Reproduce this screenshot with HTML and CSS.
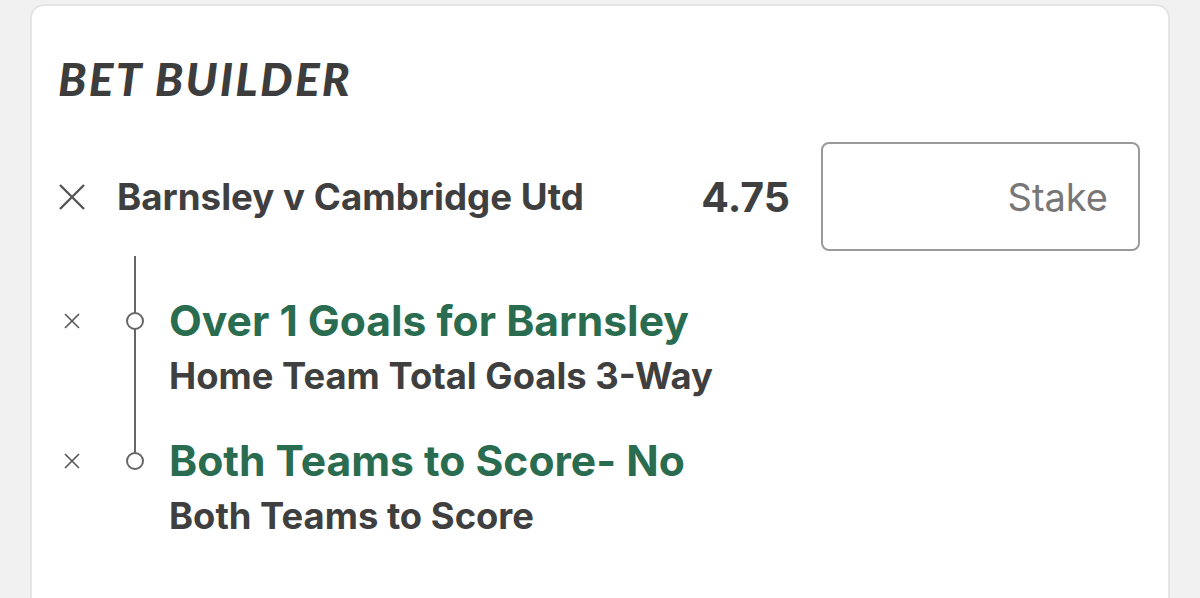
FILE: index.html
```html
<!DOCTYPE html>
<html>
<head>
<meta charset="utf-8">
<link rel="stylesheet" href="styles.css">
</head>
<body>
<div class="card">
  <h1 class="title">BET BUILDER</h1>
  <div class="main-row">
    <span class="x-icon big">
      <svg width="28" height="28" viewBox="0 0 28 28"><path d="M2 2 L26 26 M26 2 L2 26" stroke="#555" stroke-width="2.4" fill="none"/></svg>
    </span>
    <span class="match">Barnsley v Cambridge Utd</span>
    <span class="odds">4.75</span>
    <div class="stake">Stake</div>
  </div>
  <div class="legs">
    <div class="leg">
      <span class="x-icon small">
        <svg width="16" height="16" viewBox="0 0 16 16"><path d="M1 1 L15 15 M15 1 L1 15" stroke="#555" stroke-width="1.6" fill="none"/></svg>
      </span>
      <span class="node"></span>
      <div class="leg-text">
        <div class="leg-title">Over 1 Goals for Barnsley</div>
        <div class="leg-market">Home Team Total Goals 3-Way</div>
      </div>
    </div>
    <div class="leg">
      <span class="x-icon small">
        <svg width="16" height="16" viewBox="0 0 16 16"><path d="M1 1 L15 15 M15 1 L1 15" stroke="#555" stroke-width="1.6" fill="none"/></svg>
      </span>
      <span class="node"></span>
      <div class="leg-text">
        <div class="leg-title">Both Teams to Score- No</div>
        <div class="leg-market">Both Teams to Score</div>
      </div>
    </div>
  </div>
</div>
</body>
</html>
```

FILE: styles.css
```css
html, body {
  margin: 0;
  padding: 0;
  background: #f1f1f1;
  height: 100%;
  overflow: hidden;
}

body {
  font-family: Inter, "Noto Sans", sans-serif;
  color: #3f3f3f;
}

.card {
  margin: 4px 30px 0 30px;
  height: 620px;
  background: #fff;
  border: 2px solid #e4e4e4;
  border-radius: 14px;
  padding: 0 28px 0 26px;
  box-sizing: border-box;
}

.title {
  margin: 0;
  padding-top: 45px;
  font-family: Lato, sans-serif;
  font-weight: 900;
  font-style: italic;
  font-size: 46px;
  line-height: 56px;
  letter-spacing: 2.3px;
  color: #3d3d3d;
}

.main-row {
  display: flex;
  align-items: center;
  margin-top: 35px;
}

.x-icon {
  display: flex;
  align-items: center;
  justify-content: center;
  width: 28px;
  flex: none;
}

.match {
  margin-left: 31px;
  font-weight: 700;
  font-size: 36.7px;
  flex: 1;
}

.odds {
  font-weight: 700;
  font-size: 41px;
  margin-right: 31px;
}

.stake {
  width: 319px;
  height: 109px;
  box-sizing: border-box;
  border: 2px solid #9a9a9a;
  border-radius: 8px;
  display: flex;
  align-items: center;
  justify-content: flex-end;
  padding-right: 30px;
  font-size: 38px;
  color: #777;
}

.legs {
  position: relative;
  padding-top: 39px;
  margin-top: 5px;
}

.legs::before {
  content: "";
  position: absolute;
  left: 76px;
  top: 0;
  width: 2px;
  height: 205px;
  background: #666;
}

.leg {
  display: flex;
  align-items: flex-start;
  height: 140px;
}

.leg .x-icon {
  height: 52px;
}

.node {
  position: relative;
  margin: 17px 0 0 40px;
  width: 18px;
  height: 18px;
  box-sizing: border-box;
  border: 2px solid #666;
  border-radius: 50%;
  background: #fff;
  flex: none;
}

.leg-text {
  margin-left: 25px;
}

.leg-title {
  font-weight: 700;
  font-size: 42.6px;
  line-height: 52px;
  color: #2a6c4f;
}

.leg-market {
  margin-top: 8px;
  font-weight: 700;
  font-size: 36.4px;
  line-height: 42px;
}
```
